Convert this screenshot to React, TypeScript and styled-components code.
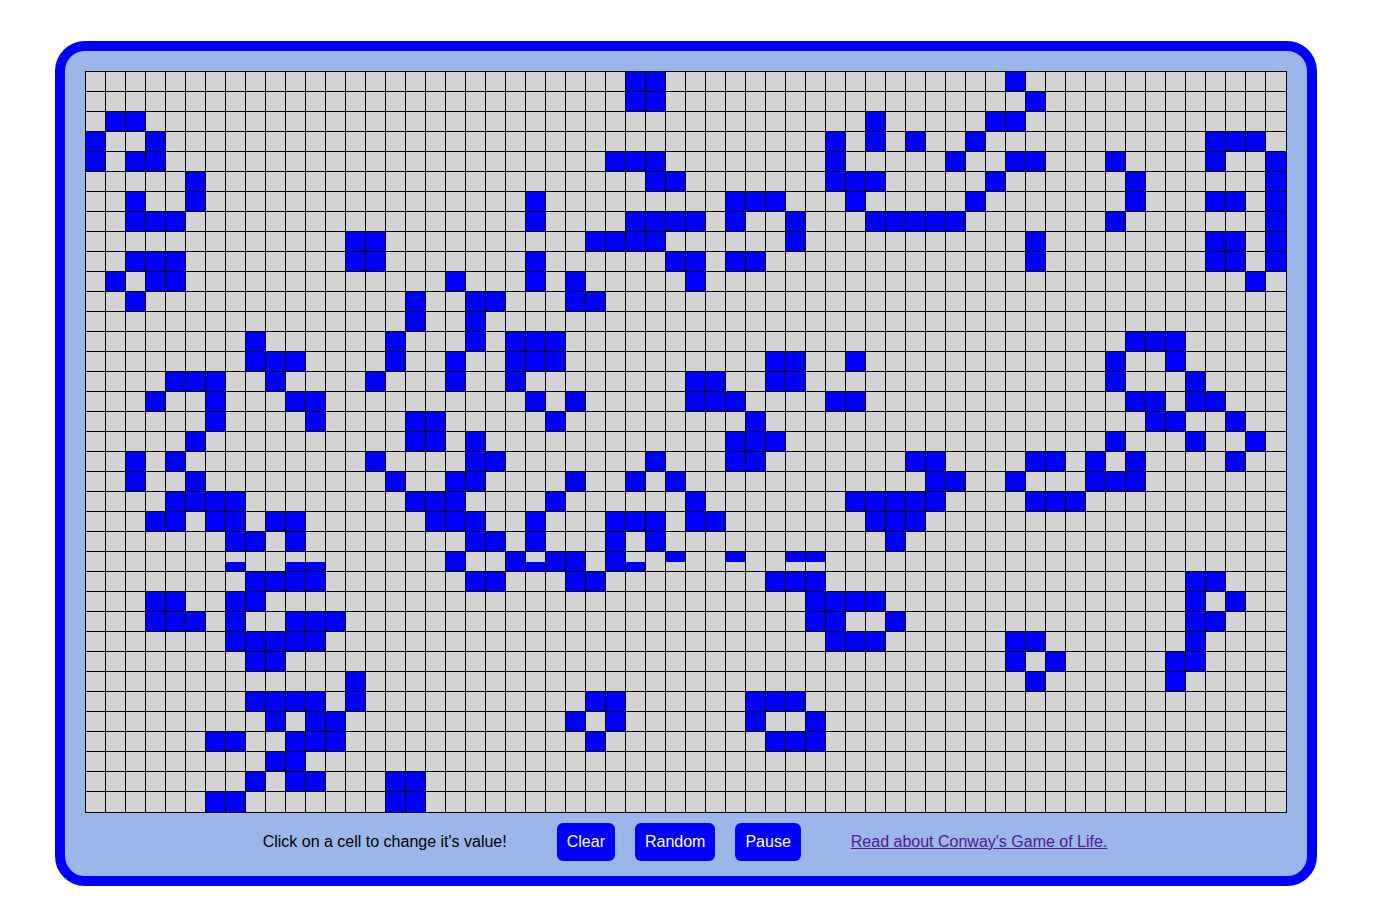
import React from 'react';
import styled, { createGlobalStyle } from 'styled-components';

const COLS = 60;

// live cells per row
const LIVE: number[][] = [
  [27, 28, 46],
  [27, 28, 47],
  [1, 2, 39, 45, 46],
  [0, 3, 37, 39, 41, 44, 56, 57, 58],
  [0, 2, 3, 26, 27, 28, 37, 43, 46, 47, 51, 56, 59],
  [5, 28, 29, 37, 38, 39, 45, 52, 59],
  [2, 5, 22, 32, 33, 34, 38, 44, 52, 56, 57, 59],
  [2, 3, 4, 22, 27, 28, 29, 30, 32, 35, 39, 40, 41, 42, 43, 51, 59],
  [13, 14, 25, 26, 27, 28, 35, 47, 56, 57, 59],
  [2, 3, 4, 13, 14, 22, 29, 30, 32, 33, 47, 56, 57, 59],
  [1, 3, 4, 18, 22, 24, 30, 58],
  [2, 16, 19, 20, 24, 25],
  [16, 19],
  [8, 15, 19, 21, 22, 23, 52, 53, 54],
  [8, 9, 10, 15, 18, 21, 22, 23, 34, 35, 38, 51, 54],
  [4, 5, 6, 9, 14, 18, 21, 30, 31, 34, 35, 51, 55],
  [3, 6, 10, 11, 22, 24, 30, 31, 32, 37, 38, 52, 53, 55, 56],
  [6, 11, 16, 17, 23, 33, 53, 54, 57],
  [5, 16, 17, 19, 32, 33, 34, 51, 55, 58],
  [2, 4, 14, 19, 20, 28, 32, 33, 41, 42, 47, 48, 50, 52, 57],
  [2, 5, 15, 18, 19, 24, 27, 29, 42, 43, 46, 50, 51, 52],
  [4, 5, 6, 7, 16, 17, 18, 23, 30, 38, 39, 40, 41, 42, 47, 48, 49],
  [3, 4, 6, 7, 9, 10, 17, 18, 19, 22, 26, 27, 28, 30, 31, 39, 40, 41],
  [7, 8, 10, 19, 20, 22, 26, 28, 40],
  [18, 21, 23, 24, 26],
  [8, 9, 10, 11, 19, 20, 24, 25, 34, 35, 36, 55, 56],
  [3, 4, 7, 8, 36, 37, 38, 39, 55, 57],
  [3, 4, 5, 7, 10, 11, 12, 36, 37, 40, 55, 56],
  [7, 8, 9, 10, 11, 37, 38, 39, 46, 47, 55],
  [8, 9, 46, 48, 54, 55],
  [13, 47, 54],
  [8, 9, 10, 11, 13, 25, 26, 33, 34, 35],
  [9, 11, 12, 24, 26, 33, 36],
  [6, 7, 10, 11, 12, 25, 34, 35, 36],
  [9, 10],
  [8, 10, 11, 15, 16],
  [6, 7, 15, 16],
];

// row 24 was caught half way through a re-render
const HALF_ROW = 24;
const HALF_BOTTOM = [7, 10, 11, 22, 27];
const HALF_TOP = [29, 32, 35, 36];

type CellState = 'dead' | 'live' | 'top' | 'bottom';

const cellState = (row: number, col: number): CellState => {
  if (LIVE[row].includes(col)) return 'live';
  if (row === HALF_ROW && HALF_BOTTOM.includes(col)) return 'bottom';
  if (row === HALF_ROW && HALF_TOP.includes(col)) return 'top';
  return 'dead';
};

const GlobalStyle = createGlobalStyle`
  body {
    margin: 0;
    background: #fff;
    font-family: "Liberation Sans", Arial, sans-serif;
    font-size: 16px;
  }
`;

const Frame = styled.div`
  box-sizing: border-box;
  width: 1262px;
  height: 845px;
  margin: 41px 0 0 55px;
  padding: 20px 20px 0;
  background: #9bb7e9;
  border: 10px solid #00f;
  border-radius: 30px;
`;

const Board = styled.div`
  display: grid;
  grid-template-columns: repeat(59, 20px) 21px;
  grid-template-rows: repeat(36, 20px) 21px;
  width: 1202px;
  box-sizing: border-box;
  border-right: 1px solid #000;
  border-bottom: 1px solid #000;
`;

const fills: Record<CellState, string> = {
  dead: '#d3d3d3',
  live: '#00f',
  top: 'linear-gradient(#00f 10px, #d3d3d3 10px)',
  bottom: 'linear-gradient(#d3d3d3 10px, #00f 10px)',
};

const Cell = styled.div<{ $state: CellState }>`
  box-sizing: border-box;
  border-left: 1px solid #000;
  border-top: 1px solid #000;
  background: ${(p) => fills[p.$state]};
`;

const Controls = styled.div`
  display: flex;
  justify-content: center;
  align-items: center;
  gap: 20px;
  padding: 10px 2px 0 0;
`;

const Hint = styled.span`
  margin-right: 30px;
  color: #000;
`;

const ControlButton = styled.button`
  height: 38px;
  padding: 0 10px;
  border: none;
  border-radius: 6px;
  background: #00f;
  color: #fff;
  font-family: inherit;
  font-size: 16px;
`;

const ReadMore = styled.a`
  margin-left: 30px;
  color: #551a8b;
  text-decoration: underline;
`;

function App() {
  return (
    <>
      <GlobalStyle />
      <Frame>
        <Board>
          {LIVE.map((_, row) =>
            Array.from({ length: COLS }, (__, col) => (
              <Cell key={`${row}-${col}`} $state={cellState(row, col)} />
            ))
          )}
        </Board>
        <Controls>
          <Hint>Click on a cell to change it's value!</Hint>
          <ControlButton>Clear</ControlButton>
          <ControlButton>Random</ControlButton>
          <ControlButton>Pause</ControlButton>
          <ReadMore href="#conway">Read about Conway's Game of Life.</ReadMore>
        </Controls>
      </Frame>
    </>
  );
}

export default App;
